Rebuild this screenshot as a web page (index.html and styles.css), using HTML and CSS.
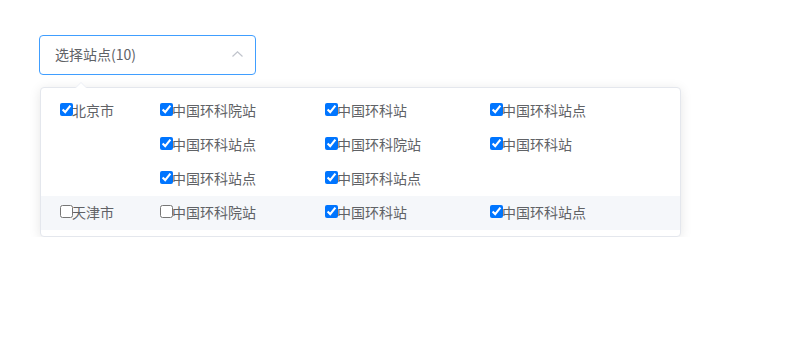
FILE: index.html
```html
<!DOCTYPE html>
<html lang="zh">
<head>
<meta charset="utf-8">
<link rel="stylesheet" href="styles.css">
</head>
<body>
<div class="select">
  <span class="select-text">选择站点(10)</span>
  <svg class="chevron" width="11" height="6" viewBox="0 0 11 6"><polyline points="0.5,5.5 5.5,0.8 10.5,5.5" fill="none" stroke="#c0c4cc" stroke-width="1.2"/></svg>
</div>
<div class="dropdown">
  <div class="arrow"></div>
  <div class="group">
    <label class="check city"><input type="checkbox" checked>北京市</label>
    <div class="items">
      <label class="check"><input type="checkbox" checked>中国环科院站</label>
      <label class="check"><input type="checkbox" checked>中国环科站</label>
      <label class="check"><input type="checkbox" checked>中国环科站点</label>
      <label class="check"><input type="checkbox" checked>中国环科站点</label>
      <label class="check"><input type="checkbox" checked>中国环科院站</label>
      <label class="check"><input type="checkbox" checked>中国环科站</label>
      <label class="check"><input type="checkbox" checked>中国环科站点</label>
      <label class="check"><input type="checkbox" checked>中国环科站点</label>
    </div>
  </div>
  <div class="group hover">
    <label class="check city"><input type="checkbox">天津市</label>
    <div class="items">
      <label class="check"><input type="checkbox">中国环科院站</label>
      <label class="check"><input type="checkbox" checked>中国环科站</label>
      <label class="check"><input type="checkbox" checked>中国环科站点</label>
    </div>
  </div>
</div>
</body>
</html>
```
FILE: styles.css
```css
body {
  margin: 0;
  padding: 35px 0 0 39px;
  font-family: "Noto Sans CJK SC", "Microsoft YaHei", sans-serif;
  color: #606266;
  background: #fff;
}
.select {
  width: 217px;
  height: 40px;
  box-sizing: border-box;
  border: 1px solid #409eff;
  border-radius: 4px;
  display: flex;
  align-items: center;
  justify-content: space-between;
  padding: 0 12px 2px 15px;
  font-size: 14px;
}
.chevron {
  display: block;
  margin-top: 0;
}
.dropdown {
  position: relative;
  margin: 12px 0 0 1px;
  width: 641px;
  box-sizing: border-box;
  border: 1px solid #e4e7ed;
  border-radius: 4px;
  box-shadow: 0 2px 12px 0 rgba(0, 0, 0, 0.1);
  padding: 6px 0;
  background: #fff;
}
.arrow {
  position: absolute;
  top: -12px;
  left: 34px;
  width: 0;
  height: 0;
  border: 6px solid transparent;
  border-bottom-color: #ebeef5;
}
.arrow::after {
  content: "";
  position: absolute;
  left: -6px;
  top: -5px;
  border: 6px solid transparent;
  border-bottom-color: #fff;
}
.group {
  display: flex;
}
.group.hover {
  background: #f5f7fa;
}
.city {
  width: 120px;
  padding-left: 20px;
  box-sizing: border-box;
  align-self: flex-start;
}
.items {
  display: grid;
  grid-template-columns: repeat(3, 165px);
  grid-auto-rows: 34px;
}
.check {
  display: flex;
  align-items: center;
  height: 34px;
  box-sizing: border-box;
  padding-bottom: 3px;
  font-size: 14px;
  color: #606266;
}
.check input {
  width: 13px;
  height: 13px;
  margin: 0 -1px 0 -1px;
}
```
